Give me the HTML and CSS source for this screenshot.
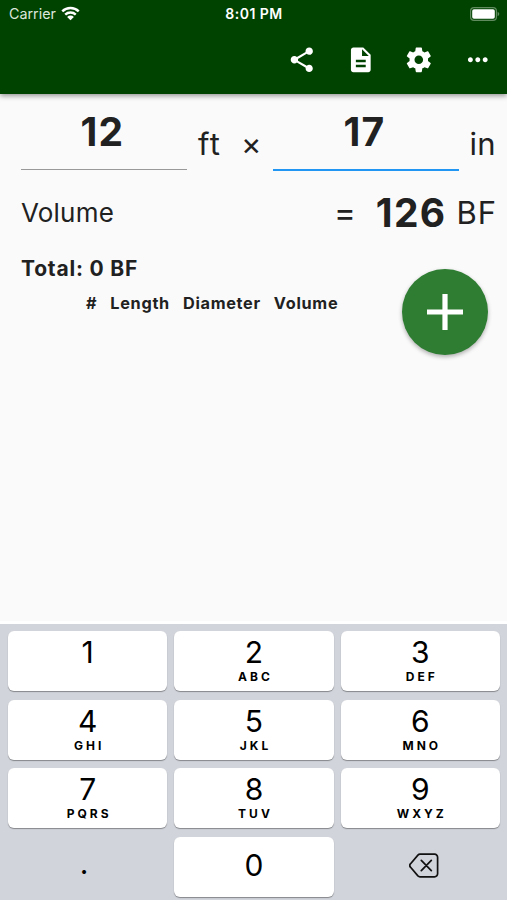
FILE: index.html
```html
<!DOCTYPE html>
<html lang="en">
<head>
    <meta charset="UTF-8">
    <meta name="viewport" content="width=device-width, initial-scale=1.0">
    <title>Log Volume</title>
    <link rel="stylesheet" href="styles.css">
</head>
<body>
    <header class="app-bar">
        <div class="status-bar">
            <div class="carrier">
                <span>Carrier</span>
                <svg class="wifi" viewBox="0 0 18 14">
                    <path d="M1.2 4.9a11.2 11.2 0 0 1 15.6 0M4 8a7.2 7.2 0 0 1 10 0" fill="none" stroke="#fff" stroke-width="2.3"/>
                    <path d="M9 13.5 5.8 10.2a4.6 4.6 0 0 1 6.4 0z" fill="#fff"/>
                </svg>
            </div>
            <div class="time">8:01 PM</div>
            <div class="battery">
                <svg viewBox="0 0 30 14">
                    <rect x=".6" y=".6" width="25.8" height="12.8" rx="3.4" fill="none" stroke="#5f8b5f" stroke-width="1.2"/>
                    <rect x="2.2" y="2.2" width="22.6" height="9.6" rx="1.8" fill="#fff"/>
                    <path d="M27.6 4.8c2.2.8 2.2 3.6 0 4.4z" fill="#5f8b5f"/>
                </svg>
            </div>
        </div>
        <nav class="actions">
            <svg viewBox="0 0 24 24"><path d="M18 16.08c-.76 0-1.44.3-1.96.77L8.91 12.7c.05-.23.09-.46.09-.7s-.04-.47-.09-.7l7.05-4.11c.54.5 1.25.81 2.04.81 1.66 0 3-1.34 3-3s-1.34-3-3-3-3 1.34-3 3c0 .24.04.47.09.7L8.04 9.81C7.5 9.31 6.79 9 6 9c-1.66 0-3 1.34-3 3s1.34 3 3 3c.79 0 1.5-.31 2.04-.81l7.12 4.16c-.05.21-.08.43-.08.65 0 1.61 1.31 2.92 2.92 2.92s2.92-1.31 2.92-2.92-1.31-2.92-2.92-2.92z"/></svg>
            <svg viewBox="0 0 24 24"><path d="M14 2H6c-1.1 0-1.99.9-1.99 2L4 20c0 1.1.89 2 1.99 2H18c1.1 0 2-.9 2-2V8l-6-6zm2 16H8v-2h8v2zm0-4H8v-2h8v2zm-3-5V3.5L18.5 9H13z"/></svg>
            <svg viewBox="0 0 24 24"><path d="M19.43 12.98c.04-.32.07-.64.07-.98s-.03-.66-.07-.98l2.11-1.65c.19-.15.24-.42.12-.64l-2-3.46c-.12-.22-.39-.3-.61-.22l-2.49 1c-.52-.4-1.08-.73-1.69-.98l-.38-2.65C14.46 2.18 14.25 2 14 2h-4c-.25 0-.46.18-.49.42l-.38 2.65c-.61.25-1.17.59-1.69.98l-2.49-1c-.23-.09-.49 0-.61.22l-2 3.46c-.13.22-.07.49.12.64l2.11 1.65c-.04.32-.07.65-.07.98s.03.66.07.98l-2.11 1.65c-.19.15-.24.42-.12.64l2 3.46c.12.22.39.3.61.22l2.49-1c.52.4 1.08.73 1.69.98l.38 2.65c.03.24.24.42.49.42h4c.25 0 .46-.18.49-.42l.38-2.65c.61-.25 1.17-.59 1.69-.98l2.49 1c.23.09.49 0 .61-.22l2-3.46c.12-.22.07-.49-.12-.64l-2.11-1.65zM12 15.5c-1.93 0-3.5-1.57-3.5-3.5s1.57-3.5 3.5-3.5 3.5 1.57 3.5 3.5-1.57 3.5-3.5 3.5z"/></svg>
            <svg viewBox="0 0 24 24"><path d="M6 10c-1.1 0-2 .9-2 2s.9 2 2 2 2-.9 2-2-.9-2-2-2zm12 0c-1.1 0-2 .9-2 2s.9 2 2 2 2-.9 2-2-.9-2-2-2zm-6 0c-1.1 0-2 .9-2 2s.9 2 2 2 2-.9 2-2-.9-2-2-2z"/></svg>
        </nav>
    </header>

    <main class="content">
        <div class="inputs">
            <div class="field length">12</div>
            <span class="unit ft">ft</span>
            <span class="unit times">×</span>
            <div class="field diameter active">17</div>
            <span class="unit in">in</span>
        </div>

        <div class="result">
            <span class="label">Volume</span>
            <span class="equals">=</span>
            <span class="value">126</span>
            <span class="bf">BF</span>
        </div>

        <div class="log">
            <div class="totals">
                <div class="total">Total: 0 BF</div>
                <div class="columns">
                    <span>#</span>
                    <span>Length</span>
                    <span>Diameter</span>
                    <span>Volume</span>
                </div>
            </div>
            <div class="add">
                <svg viewBox="0 0 36 36"><path d="M18 0v36M0 18h36" stroke="#fff" stroke-width="5.2"/></svg>
            </div>
        </div>
    </main>

    <div class="keypad">
        <div class="key"><b>1</b></div>
        <div class="key"><b>2</b><small>ABC</small></div>
        <div class="key"><b>3</b><small>DEF</small></div>
        <div class="key"><b>4</b><small>GHI</small></div>
        <div class="key"><b>5</b><small>JKL</small></div>
        <div class="key"><b>6</b><small>MNO</small></div>
        <div class="key"><b>7</b><small>PQRS</small></div>
        <div class="key"><b>8</b><small>TUV</small></div>
        <div class="key"><b>9</b><small>WXYZ</small></div>
        <div class="key plain dot"><b>.</b></div>
        <div class="key zero"><b>0</b></div>
        <div class="key plain">
            <svg viewBox="0 0 30 25">
                <path d="M11 1.2h14.6a3 3 0 0 1 3 3v16.6a3 3 0 0 1-3 3H11a3 3 0 0 1-2.1-.9l-7.3-8.6a2.6 2.6 0 0 1 0-3.6L8.9 2.1A3 3 0 0 1 11 1.2zM12.3 7.3l10 10.4M22.3 7.3l-10 10.4" fill="none" stroke="#111" stroke-width="1.7" stroke-linecap="round"/>
            </svg>
        </div>
    </div>
</body>
</html>
```
FILE: styles.css
```css
* {
    box-sizing: border-box;
}

body {
    margin: 0;
    height: 900px;
    display: flex;
    flex-direction: column;
    background-color: #fafafa;
    color: #212121;
    font-family: Inter, "Liberation Sans", sans-serif;
    overflow: hidden;
}

/* --- App bar --- */
.app-bar {
    height: 94px;
    background-color: #004300;
    color: #fff;
    box-shadow: 0 2px 5px rgba(0, 0, 0, 0.4);
}

.status-bar {
    height: 27px;
    display: grid;
    grid-template-columns: 1fr auto 1fr;
    align-items: center;
    padding: 0 7px 0 9px;
    font-size: 14.3px;
}

.carrier {
    display: flex;
    align-items: center;
    gap: 5px;
    color: #dce6dc;
}

.wifi {
    width: 19px;
    height: 15px;
}

.time {
    font-size: 14px;
    font-weight: 600;
    letter-spacing: 0.5px;
    margin-right: 1px;
}

.battery {
    display: flex;
    justify-content: flex-end;
}

.battery svg {
    width: 30px;
    height: 14px;
}

.actions {
    display: flex;
    justify-content: flex-end;
    gap: 29px;
    padding: 17.6px 14.5px 0 0;
}

.actions svg {
    width: 29.6px;
    height: 29.6px;
    fill: #fff;
}

/* --- Calculator --- */
.content {
    flex: 1;
    padding: 0 11px 0 21px;
}

.inputs {
    display: flex;
    height: 77px;
    font-size: 31px;
}

.field {
    height: 76px;
    line-height: 76px;
    text-align: center;
    font-size: 39px;
    font-weight: 700;
    letter-spacing: 1.2px;
    border-bottom: 1px solid #999;
}

.length {
    width: 166px;
    padding-right: 3px;
}

.diameter {
    width: 186px;
    padding-right: 3px;
}

.active {
    height: 77px;
    border-bottom: 2px solid #2196f3;
}

.unit {
    line-height: 99px;
}

.ft {
    width: 55px;
    padding-left: 11px;
    letter-spacing: 1.3px;
}

.times {
    width: 31px;
    line-height: 100px;
    text-indent: -1px;
}

.in {
    margin-left: auto;
    letter-spacing: 0.4px;
}

.result {
    display: flex;
    height: 80px;
    line-height: 83px;
    font-size: 31px;
}

.label {
    font-size: 26px;
    letter-spacing: 0.2px;
    margin-right: auto;
}

.equals {
    font-size: 33px;
    line-height: 83px;
}

.value {
    margin: 0 10px 0 20px;
    font-size: 39px;
    font-weight: 700;
    letter-spacing: 1.3px;
}

.bf {
    letter-spacing: 1px;
    margin-right: -1px;
}

.log {
    display: flex;
    justify-content: space-between;
}

.total {
    margin-top: 4px;
    line-height: 27px;
    font-size: 21px;
    font-weight: 700;
    letter-spacing: 0.8px;
}

.columns {
    display: flex;
    gap: 13px;
    margin: 11px 0 0 65px;
    line-height: 20px;
    font-size: 16.3px;
    font-weight: 700;
    letter-spacing: 0.7px;
}

.add {
    display: flex;
    justify-content: center;
    align-items: center;
    width: 86px;
    height: 86px;
    margin: 18px 8px 0 0;
    border-radius: 50%;
    background-color: #2e7d32;
    box-shadow: 0 2px 4px rgba(0, 0, 0, 0.3);
}

.add svg {
    width: 36px;
    height: 36px;
}

/* --- Number keyboard --- */
.keypad {
    display: grid;
    grid-template-columns: repeat(3, 1fr);
    grid-auto-rows: 60px;
    gap: 8.5px 7px;
    height: 279px;
    padding: 7px 7px 0 8px;
    border-top: 3px solid #fff;
    background-color: #d1d4db;
    color: #000;
}

.key {
    display: flex;
    flex-direction: column;
    align-items: center;
    padding-top: 3px;
    border-radius: 6px;
    background-color: #fff;
    box-shadow: 0 1px 1px #85878b;
}

.key b {
    font-size: 30px;
    font-weight: 400;
    line-height: 37px;
}

.key small {
    font-size: 12px;
    font-weight: 700;
    line-height: 12px;
    letter-spacing: 3px;
    padding-left: 3px;
}

.zero {
    padding-top: 10px;
}

.plain {
    justify-content: center;
    padding: 0 0 2px 7px;
    background: none;
    box-shadow: none;
}

.plain svg {
    width: 30px;
    height: 25px;
}

.dot {
    padding: 0 7px 7px 0;
}
```
